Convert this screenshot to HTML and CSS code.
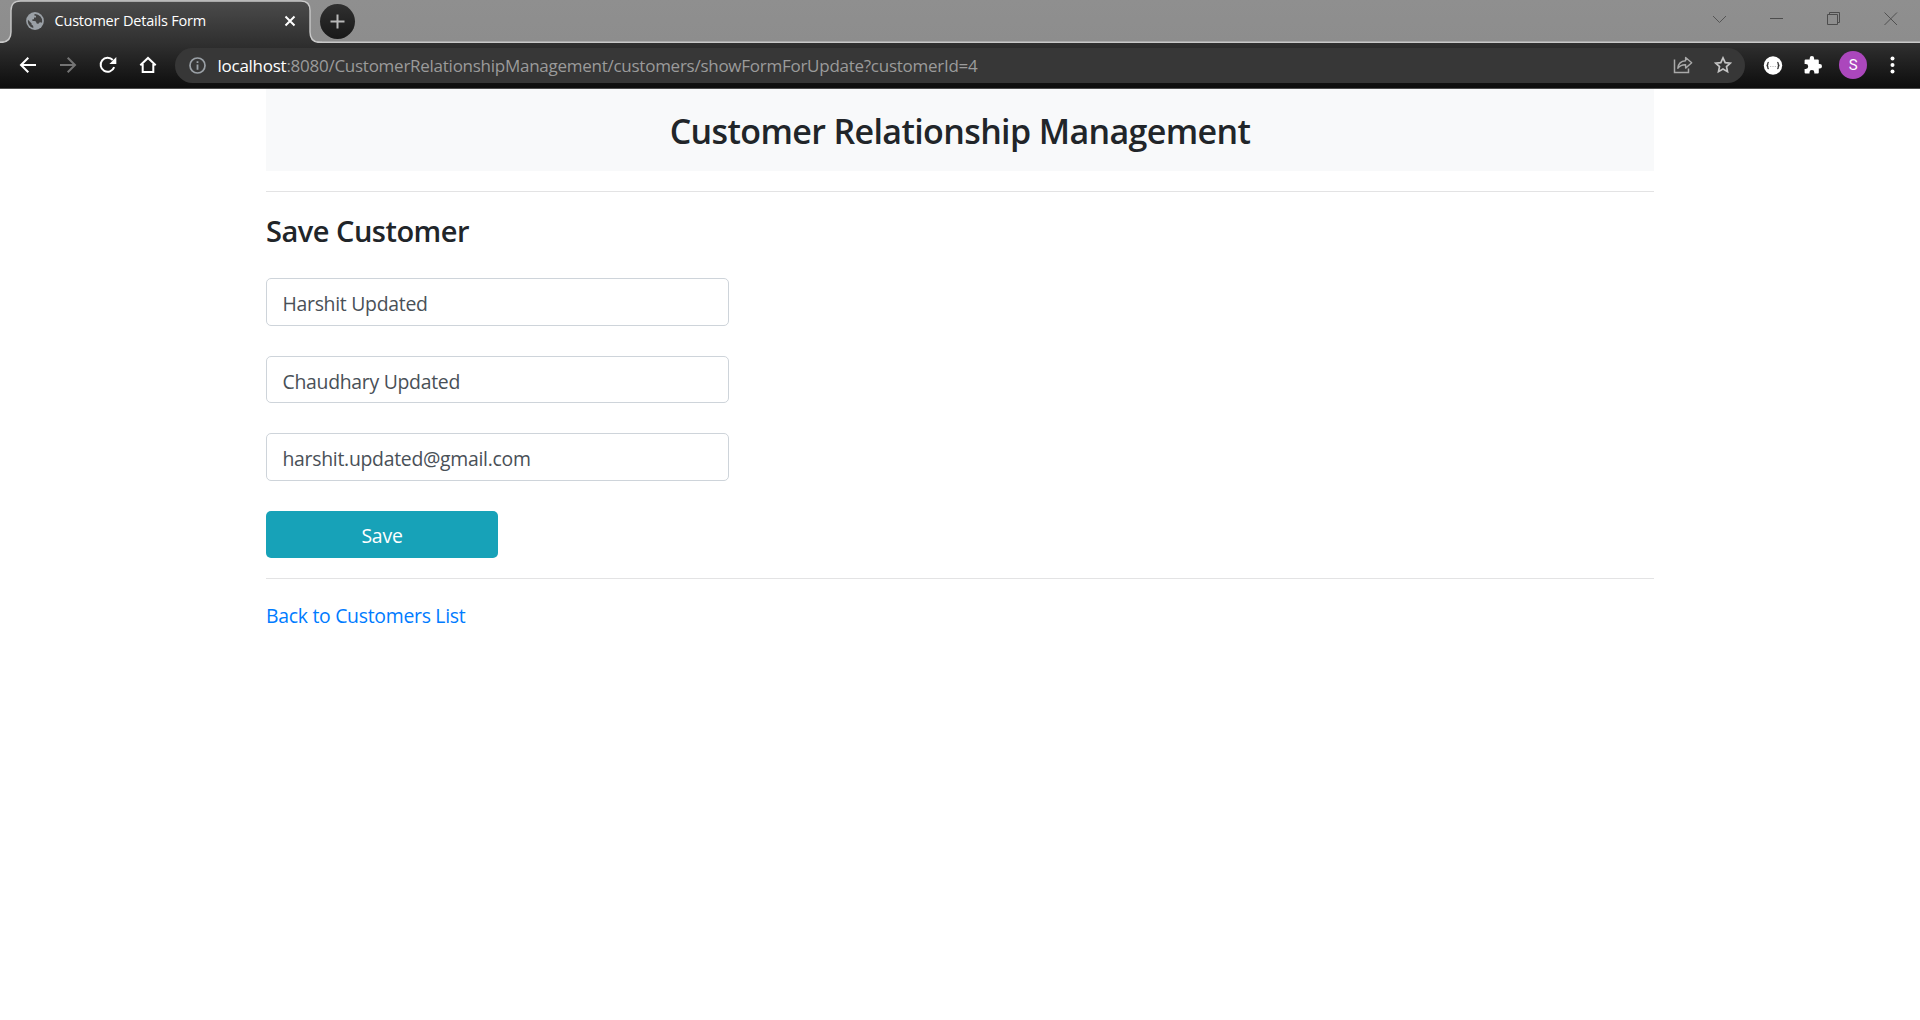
FILE: index.html
```html
<!DOCTYPE html>
<html lang="en">
<head>
<meta charset="utf-8">
<title>Customer Details Form</title>
<link rel="stylesheet" href="styles.css">
</head>
<body>
<header class="browser">
  <div class="tabstrip">
    <div class="tab">
      <svg class="tab-shape" width="322" height="43" viewBox="0 0 322 43">
        <defs><linearGradient id="tabfill" x1="0" y1="0" x2="0" y2="1"><stop offset="0" stop-color="#4b4b4b"/><stop offset="1" stop-color="#303030"/></linearGradient></defs>
        <path d="M0 43V42.5Q11 42.500 11 32V10.500Q11 1 20.500 1H301Q310 1 310 10.500V32Q310 42.500 320.500 42.500H322V43Z" fill="url(#tabfill)"/>
        <path d="M0 42.500Q11 42.500 11 32V10.500Q11 1 20.500 1H301Q310 1 310 10.500V32Q310 42.500 320.500 42.500H322" fill="none" stroke="#c9c9c9" stroke-width="1.400"/>
      </svg>
      <svg class="globe" width="18" height="18" viewBox="0 0 18 18">
        <circle cx="9" cy="9" r="8.900" fill="#9aa0a6"/>
        <path d="M2 7.800L5.600 11.500V12.700Q7.300 13 7.300 14.600V16.100A7.200 7.200 0 0 1 2 7.800ZM8.500 1.900A7.200 7.200 0 0 1 15.900 10.800L14.500 10.300Q12.500 10.400 12.300 12L10.400 11.200Q10.600 9 8.500 8.900H6.400V7.300H8V5.500H10V3.800H8.500Z" fill="#424242"/>
      </svg>
      <span class="tab-title">Customer Details Form</span>
      <svg class="tab-close" width="12" height="12" viewBox="0 0 12 12"><path d="M1.500 1.500L10.500 10.500M10.500 1.500L1.500 10.500" stroke="#fff" stroke-width="2"/></svg>
    </div>
    <div class="new-tab"><svg width="15" height="15" viewBox="0 0 15 15"><path d="M7.500 .5V14.500M.5 7.500H14.500" stroke="#b8b8b8" stroke-width="2"/></svg></div>
    <div class="window-controls">
      <svg width="15" height="14" viewBox="0 0 15 14"><path d="M1 4L7.500 10.500L14 4" fill="none" stroke="#555"/></svg>
      <svg width="14" height="14" viewBox="0 0 14 14"><path d="M0 6.500H13" stroke="#4d4d4d"/></svg>
      <svg width="14" height="14" viewBox="0 0 14 14"><path d="M.5 2.500H10.500V12.500H.5ZM2.500 2V.5H12.500V10.500H11" fill="none" stroke="#4d4d4d"/></svg>
      <svg width="14" height="14" viewBox="0 0 14 14"><path d="M.5 .5L13 13M13 .5L.5 13" fill="none" stroke="#505050"/></svg>
    </div>
  </div>
  <div class="toolbar">
    <nav class="nav">
      <svg width="18" height="18" viewBox="0 0 18 18"><path d="M17 9H2M9.300 1.700L2 9L9.300 16.300" fill="none" stroke="#fff" stroke-width="2"/></svg>
      <svg width="18" height="18" viewBox="0 0 18 18"><path d="M1 9H16M8.700 1.700L16 9L8.700 16.300" fill="none" stroke="#747474" stroke-width="2"/></svg>
      <svg width="18" height="18" viewBox="0 0 18 18"><path d="M15.200 11.200A7 7 0 1 1 13.800 4" fill="none" stroke="#fff" stroke-width="2"/><path d="M17.300 1V7.900H10.400Z" fill="#fff"/></svg>
      <svg width="18" height="18" viewBox="0 0 18 18"><path d="M1.300 9.300L9 2L16.700 9.300M3.700 8V16H14.300V8" fill="none" stroke="#fff" stroke-width="2"/></svg>
    </nav>
    <div class="omnibox">
      <svg width="17" height="17" viewBox="0 0 17 17"><circle cx="8.500" cy="8.500" r="7.500" fill="none" stroke="#9aa0a6" stroke-width="1.700"/><path d="M8.500 7.500V12.700M8.500 4.300V6" stroke="#9aa0a6" stroke-width="1.800"/></svg>
      <span class="url"><span class="host">localhost</span>:8080/CustomerRelationshipManagement/customers/showFormForUpdate?customerId=4</span>
      <svg class="share" width="20" height="18" viewBox="0 0 20 18"><path d="M1.500 3.500V16.500H15.500V12.500" fill="none" stroke="#a9a9a9" stroke-width="1.500"/><path d="M4.800 12.300Q5.500 5 12.600 4.700V1.400L18.700 6.800L12.600 12.100V8.800Q7.800 8.600 4.800 12.300Z" fill="none" stroke="#a9a9a9" stroke-width="1.400" stroke-linejoin="round"/></svg>
      <svg class="star" width="18" height="18" viewBox="0 0 18 18"><path d="M9 1.900L11.200 6.600L16.300 7.200L12.500 10.600L13.500 15.700L9 13.100L4.500 15.700L5.500 10.600L1.700 7.200L6.800 6.600Z" fill="none" stroke="#c4c4c4" stroke-width="1.700"/></svg>
    </div>
    <div class="actions">
      <svg width="20" height="20" viewBox="0 0 20 20"><circle cx="10" cy="10.500" r="9.200" fill="#fff"/><path d="M5.800 7.300Q4.800 7.300 4.800 8.300V9.300Q4.800 10.300 3.600 10.500Q4.800 10.700 4.800 11.700V12.700Q4.800 13.700 5.800 13.700M14.200 7.300Q15.200 7.300 15.200 8.300V9.300Q15.200 10.300 16.400 10.500Q15.200 10.700 15.200 11.700V12.700Q15.200 13.700 14.200 13.700" fill="none" stroke="#333" stroke-width="1.300"/><path d="M7.200 11.500H8.200M9.500 11.500H10.500M11.800 11.500H12.800" stroke="#aaa"/></svg>
      <svg width="20" height="20" viewBox="0 0 20 20"><path d="M2.600 4.500H6.700V3.300A2.200 2.200 0 0 1 11.100 3.300V4.500H14.800Q15.800 4.500 15.800 5.500V9H16.800A2.200 2.200 0 0 1 16.800 13.400H15.800V17.500Q15.800 18.500 14.800 18.500H11.300V17.300A2.400 2.400 0 0 0 6.500 17.300V18.500H2.600Q1.600 18.500 1.600 17.500V13.900H2.800A2.400 2.400 0 0 0 2.800 9.100H1.600V5.500Q1.600 4.500 2.600 4.500Z" fill="#fff"/></svg>
      <div class="avatar">S</div>
      <svg width="5" height="18" viewBox="0 0 5 18"><g fill="#fff"><circle cx="2.500" cy="2.500" r="2"/><circle cx="2.500" cy="9" r="2"/><circle cx="2.500" cy="15.500" r="2"/></g></svg>
    </div>
  </div>
</header>
<main class="container">
  <div class="banner"><h1>Customer Relationship Management</h1></div>
  <hr>
  <h2>Save Customer</h2>
  <form class="customer-form">
    <input type="text" value="Harshit Updated">
    <input type="text" value="Chaudhary Updated">
    <input type="text" value="harshit.updated@gmail.com">
    <button type="button">Save</button>
  </form>
  <hr>
  <a class="back" href="#">Back to Customers List</a>
</main>
</body>
</html>
```
FILE: styles.css
```css
* { box-sizing: border-box; }
body { margin: 0; background: #fff; color: #212529; font: 19.4px/30px "Open Sans", "Noto Sans", sans-serif; letter-spacing: -.28px; overflow: hidden; }
svg { display: block; flex: none; }

.browser { height: 89px; }
.tabstrip { height: 43px; display: flex; background: linear-gradient(#8f8f8f, #8d8d8d 41px, #c9c9c9 42px); }
.tab { position: relative; width: 320px; display: flex; align-items: center; padding: 0 24px 1px 26px; }
.tab-shape { position: absolute; left: 0; top: 0; }
.globe, .tab-title, .tab-close { position: relative; }
.tab-title { margin-left: 10.5px; flex: 1; color: #fff; font-size: 14.5px; line-height: 20px; letter-spacing: -.19px; white-space: nowrap; }
.new-tab { width: 35px; height: 35px; margin-top: 4px; border-radius: 50%; background: linear-gradient(#303030, #181818); display: flex; align-items: center; justify-content: center; }
.window-controls { margin-left: auto; padding: 12px 22px 0 0; display: flex; gap: 43px; }

.toolbar { height: 46px; display: flex; align-items: center; padding-bottom: 1px; background: linear-gradient(#303030, #0d0d0d); border-bottom: 1px solid #4d4d4d; }
.nav { width: 175px; padding-left: 18.5px; display: flex; gap: 22px; }
.omnibox { width: 1570px; height: 35px; border-radius: 18px; background: #373737; display: flex; align-items: center; padding: 0 13.5px 0 14px; }
.url { margin-left: 11.5px; padding-top: 2px; font-size: 17px; line-height: 24px; letter-spacing: -.26px; color: #9b9b9b; white-space: nowrap; }
.host { color: #fff; }
.share { margin-left: auto; }
.star { margin-left: 20.5px; }
.actions { flex: 1; padding-left: 18px; display: flex; align-items: center; }
.actions svg + svg { margin-left: 20px; }
.avatar { width: 28px; height: 28px; margin: 0 23px 0 16px; border-radius: 50%; background: #ab47bc; color: #fff; font: 15px/28px Roboto, sans-serif; text-align: center; }

.container { width: 1388px; margin: 0 auto; }
.banner { height: 82px; padding: 21px 20px 19px; background: #f8f9fa; text-align: center; }
h1 { margin: 0; font-size: 34px; line-height: 42px; font-weight: 560; letter-spacing: -.63px; }
hr { height: 1px; margin: 20px 0; border: 0; background: #e3e3e4; }
h2 { margin: 0 0 29px; padding-top: 1px; font-size: 29px; line-height: 36px; font-weight: 560; letter-spacing: -.5px; }
.customer-form { display: flex; flex-direction: column; gap: 30px; }
input, button { height: 47.5px; border-radius: 5px; font: inherit; letter-spacing: inherit; }
input { width: 463px; padding: 3.5px 16px 0 15.5px; border: 1px solid #ced4da; background: #fff; color: #495057; }
button { width: 232px; padding: 4px 0 0; border: 0; background: #17a2b8; color: #fff; letter-spacing: -.2px; }
.back { display: inline-block; padding-top: 2px; color: #007bff; text-decoration: none; }
```
